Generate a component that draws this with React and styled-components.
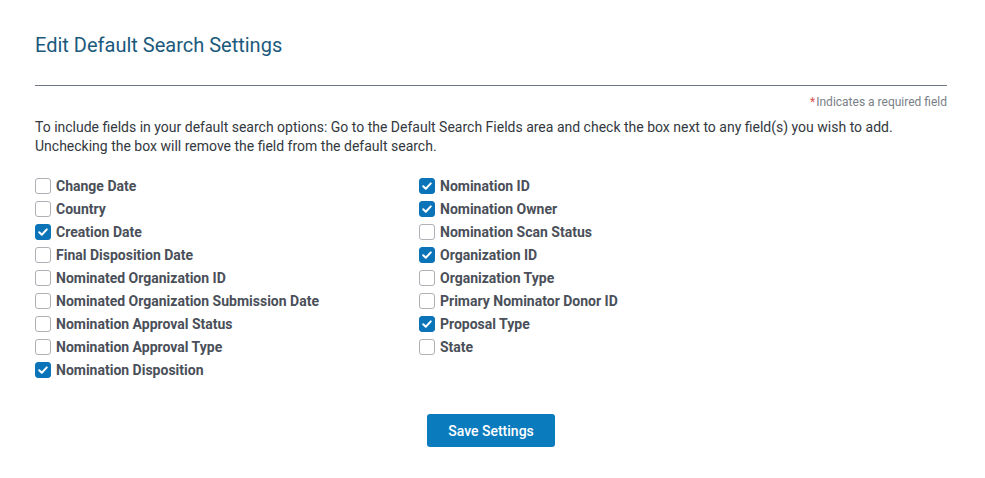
import React, { useState } from "react";
import styled, { createGlobalStyle } from "styled-components";

const GlobalStyle = createGlobalStyle`
  html, body {
    margin: 0;
    padding: 0;
    background: #ffffff;
    font-family: Roboto, "Liberation Sans", Arial, sans-serif;
  }
`;

const Page = styled.div`
  width: 912px;
  margin: 0 0 0 35px;
  padding-top: 33px;
`;

const Title = styled.h2`
  margin: 0;
  font-size: 20px;
  font-weight: 400;
  color: #1b5a7d;
  line-height: 24px;
`;

const Divider = styled.hr`
  margin: 28px 0 0;
  border: 0;
  border-top: 1px solid #6f7782;
`;

const RequiredNote = styled.div`
  margin-top: 9px;
  text-align: right;
  font-size: 12px;
  color: #7a7f87;
  line-height: 14px;

  span {
    color: #d9534f;
    margin-right: 1px;
  }
`;

const Intro = styled.p`
  margin: 9px 0 0;
  font-size: 14px;
  line-height: 19px;
  color: #333840;
`;

const Columns = styled.div`
  display: grid;
  grid-template-columns: 384px 1fr;
  margin-top: 22px;
`;

const Column = styled.div`
  display: flex;
  flex-direction: column;
  gap: 7px;
`;

const Option = styled.label`
  display: flex;
  align-items: center;
  gap: 5px;
  height: 16px;
  cursor: pointer;
  font-size: 14px;
  font-weight: 700;
  color: #4a4f59;
`;

const Box = styled.span`
  width: 16px;
  height: 16px;
  box-sizing: border-box;
  border-radius: 3px;
  display: inline-flex;
  align-items: center;
  justify-content: center;
  flex-shrink: 0;
  background: ${({ $checked }) => ($checked ? "#0b74b8" : "#ffffff")};
  border: 1px solid ${({ $checked }) => ($checked ? "#0b74b8" : "#adb1b6")};
`;

const Actions = styled.div`
  display: flex;
  justify-content: center;
  margin-top: 36px;
`;

const SaveButton = styled.button`
  width: 128px;
  height: 33px;
  border: 0;
  border-radius: 3px;
  background: #0a7bbd;
  color: #ffffff;
  font-family: inherit;
  font-size: 14px;
  font-weight: 500;
  cursor: pointer;
`;

const left = [
  ["Change Date", false],
  ["Country", false],
  ["Creation Date", true],
  ["Final Disposition Date", false],
  ["Nominated Organization ID", false],
  ["Nominated Organization Submission Date", false],
  ["Nomination Approval Status", false],
  ["Nomination Approval Type", false],
  ["Nomination Disposition", true],
];

const right = [
  ["Nomination ID", true],
  ["Nomination Owner", true],
  ["Nomination Scan Status", false],
  ["Organization ID", true],
  ["Organization Type", false],
  ["Primary Nominator Donor ID", false],
  ["Proposal Type", true],
  ["State", false],
];

const Check = () => (
  <svg width="12" height="12" viewBox="0 0 12 12">
    <path
      d="M2.2 6.2 L4.8 8.7 L9.8 3.4"
      fill="none"
      stroke="#fff"
      strokeWidth="2"
      strokeLinecap="round"
      strokeLinejoin="round"
    />
  </svg>
);

const FieldOption = ({ label, checked, onToggle }) => (
  <Option onClick={onToggle}>
    <Box $checked={checked}>{checked && <Check />}</Box>
    {label}
  </Option>
);

const App = () => {
  const [state, setState] = useState(() =>
    Object.fromEntries([...left, ...right])
  );
  const toggle = (name) => setState((s) => ({ ...s, [name]: !s[name] }));

  const renderColumn = (items) => (
    <Column>
      {items.map(([name]) => (
        <FieldOption
          key={name}
          label={name}
          checked={state[name]}
          onToggle={() => toggle(name)}
        />
      ))}
    </Column>
  );

  return (
    <>
      <GlobalStyle />
      <Page>
        <Title>Edit Default Search Settings</Title>
        <Divider />
        <RequiredNote>
          <span>*</span>Indicates a required field
        </RequiredNote>
        <Intro>
          To include fields in your default search options: Go to the Default
          Search Fields area and check the box next to any field(s) you wish to
          add.
          <br />
          Unchecking the box will remove the field from the default search.
        </Intro>
        <Columns>
          {renderColumn(left)}
          {renderColumn(right)}
        </Columns>
        <Actions>
          <SaveButton type="button">Save Settings</SaveButton>
        </Actions>
      </Page>
    </>
  );
};

export default App;
